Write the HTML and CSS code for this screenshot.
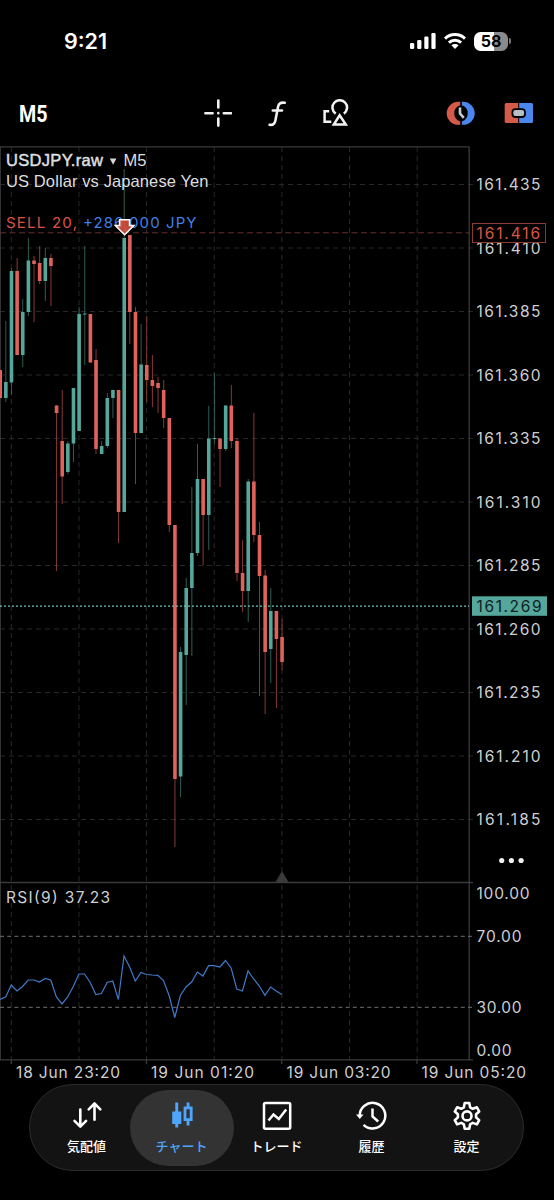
FILE: index.html
```html
<!DOCTYPE html>
<html lang="ja">
<head>
    <meta charset="UTF-8">
    <meta name="viewport" content="width=device-width, initial-scale=1.0">
    <title>USDJPY.raw M5</title>
    <link rel="stylesheet" href="styles.css">
</head>
<body>
    <header class="status-bar">
        <span class="status-time">9:21</span>
        <div class="status-icons">
            <svg width="26" height="18" viewBox="0 0 26 18" fill="#fff">
                <rect x="0" y="11" width="4.2" height="6" rx="1.2"/>
                <rect x="7.2" y="8" width="4.2" height="9" rx="1.2"/>
                <rect x="14.3" y="4.5" width="4.2" height="12.5" rx="1.2"/>
                <rect x="21.4" y="1" width="4.2" height="16" rx="1.2"/>
            </svg>
            <svg width="22" height="18" viewBox="0 0 22 18" fill="none" stroke="#fff" stroke-width="3">
                <path d="M1 6.6C6.5 1.2 15.5 1.2 21 6.6"/>
                <path d="M4.9 10.6C8.4 7.3 13.6 7.3 17.1 10.6"/>
                <path d="M11 17L7.4 13.3C9.4 11.5 12.6 11.5 14.6 13.3Z" fill="#fff" stroke="none"/>
            </svg>
            <div class="battery"><span class="battery-level">58</span></div>
        </div>
    </header>

    <div class="toolbar">
        <svg class="timeframe" width="60" height="28" viewBox="0 0 60 28">
            <text x="0" y="22.500" textLength="28.500" lengthAdjust="spacingAndGlyphs">M5</text>
        </svg>
        <svg width="28" height="28" viewBox="0 0 28 28" stroke="#f2f2f2" stroke-width="2.6" stroke-linecap="round">
            <path d="M14.3 1.5V8.5M14.3 19.5V26.6M1.4 14.2H8.6M19.8 14.2H27M14.3 14.15V14.25"/>
        </svg>
        <svg width="28" height="28" viewBox="0 0 28 28" fill="none" stroke="#f2f2f2" stroke-width="2.6" stroke-linecap="round">
            <path d="M5.6 25.8C9 26.4 10.7 25 11.4 21.5L14 8C14.6 4.5 16.6 3 20.8 3.8M8.8 11.5H18"/>
        </svg>
        <svg width="28" height="28" viewBox="0 0 28 28" fill="none" stroke="#f2f2f2" stroke-width="2.5">
            <path d="M13.7 14.6A7.3 7.3 0 1 1 21.8 14.6"/>
            <path d="M17.7 16.2L11.8 25.6H23.8Z"/>
            <path d="M7.2 12.2H2.6V22.8H9.3"/>
        </svg>
        <svg width="30" height="28" viewBox="0 0 30 28">
            <path d="M14.2 2.8H12.2A11.5 11.5 0 0 0 12.2 25.8H14.2V22.4A8.5 8.5 0 0 1 14.2 6.2Z" fill="#d65a4a"/>
            <path d="M15.8 2.8H17.2A11.5 11.5 0 0 1 17.2 25.8H15.8V22.4A8.5 8.5 0 0 0 15.8 6.2Z" fill="#4b86ee"/>
            <path d="M14 8.6V14.6L17.8 18.8" fill="none" stroke="#c8cccf" stroke-width="2.6"/>
        </svg>
        <svg width="30" height="28" viewBox="0 0 30 28">
            <path d="M2.2 4H14.2V24H2.2Q.7 24 .7 22.5V5.500Q.7 4 2.2 4Z" fill="#d65a4a"/>
            <path d="M15.200 4H27.500Q29 4 29 5.500V22.500Q29 24 27.500 24H15.200Z" fill="#4b86ee"/>
            <rect x="8.400" y="10.200" width="12.600" height="7.800" rx="3" fill="#b8bfc4" stroke="#000" stroke-width="1.800"/>
        </svg>
    </div>

    <svg class="chart" width="554" height="944" viewBox="0 140 554 944">
        <g id="grid"></g>
        <g class="frame">
            <path d="M0 146.800H469.500M0.200 147V1060M469.200 147V1060M0 882.500H473M0 1059.800H473"/>
            <path d="M11.300 1060V1064M146.500 1060V1064M281.700 1060V1064M417 1060V1064"/>
        </g>
        <path class="level" d="M0 936.300H473M0 1007.300H473"/>
        <path class="sell-line" d="M0 232.800H469"/>
        <g id="candles"></g>
        <path class="bid-line" d="M0 606.200H469"/>
        <path d="M275.500 882L282 871L288.500 882Z" fill="#3a3a3a"/>
        <polyline id="rsi" class="rsi"/>

        <text class="symbol" x="6" y="166" textLength="97">USDJPY.raw</text>
        <path d="M109.800 158.500H116.400L113.100 164.800Z" fill="#d8d8d8"/>
        <text class="title" x="123.500" y="166" textLength="23">M5</text>
        <text class="title" x="6" y="187" textLength="202.500">US Dollar vs Japanese Yen</text>
        <text class="order sell" x="6" y="228" textLength="71">SELL 20,</text>
        <text class="order profit" x="83" y="228" textLength="113.500">+286,000 JPY</text>
        <path class="sell-arrow" d="M119.600 219.800H129.600V225.500H133.800L124.600 234.700L115.400 225.500H119.600Z"/>

        <g id="prices"></g>
        <rect x="472.500" y="223.500" width="73" height="19" fill="none" stroke="#8e3a30"/>
        <text class="axis sell" x="476.500" y="238.500" textLength="63.500">161.416</text>
        <rect x="472" y="596.300" width="75" height="19.500" fill="#55a69b"/>
        <text class="axis bid" x="476.500" y="611.700" textLength="65">161.269</text>
        <g fill="#eee">
            <circle cx="501.700" cy="860.500" r="2.600"/>
            <circle cx="511.400" cy="860.500" r="2.600"/>
            <circle cx="521.100" cy="860.500" r="2.600"/>
        </g>

        <text class="axis" x="6" y="902.500" textLength="104">RSI(9) 37.23</text>
        <text class="axis" x="476.500" y="898.500" textLength="53">100.00</text>
        <text class="axis" x="476.500" y="941.700" textLength="45">70.00</text>
        <text class="axis" x="476.500" y="1012.700" textLength="45">30.00</text>
        <text class="axis" x="476.500" y="1056.200" textLength="35">0.00</text>
        <text class="axis" x="16" y="1077.700" textLength="104">18 Jun 23:20</text>
        <text class="axis" x="151" y="1077.700" textLength="103">19 Jun 01:20</text>
        <text class="axis" x="286.500" y="1077.700" textLength="104">19 Jun 03:20</text>
        <text class="axis" x="421.500" y="1077.700" textLength="104.500">19 Jun 05:20</text>
    </svg>

    <nav class="tab-bar">
        <a class="tab">
            <svg width="32" height="32" viewBox="0 0 32 32" fill="none" stroke="#fff" stroke-width="2.6" stroke-linecap="round" stroke-linejoin="round">
                <path d="M9.300 9.500V26M3.500 20.800L9.300 26.600L15.100 20.800"/>
                <path d="M23.500 19.800V4M17.700 9.300L23.500 3.500L29.300 9.300"/>
            </svg>
            <span>気配値</span>
        </a>
        <a class="tab active">
            <svg width="32" height="32" viewBox="0 0 32 32" fill="#4ea5fb">
                <path d="M9.300 2.500H12.200V11.500H15.300V24H12.200V27.500H9.300V24H6.200V11.500H9.300Z"/>
                <path fill-rule="evenodd" d="M20.600 2.500H23.500V6.500H26.600V21H23.500V25.500H20.600V21H17.600V6.500H20.600ZM20.400 9.200V18.300H23.800V9.200Z"/>
            </svg>
            <span>チャート</span>
        </a>
        <a class="tab">
            <svg width="32" height="32" viewBox="0 0 32 32" fill="none" stroke="#fff" stroke-width="2.500">
                <rect x="3" y="2.900" width="26.200" height="25.800" rx="1.500"/>
                <path d="M7.500 20.500L12.500 14.500L17.800 19L25.200 9.500"/>
            </svg>
            <span>トレード</span>
        </a>
        <a class="tab">
            <svg width="32" height="32" viewBox="0 0 32 32" fill="none" stroke="#fff" stroke-width="2.500">
                <path d="M3.700 16A12.800 12.800 0 1 1 7.600 24.900"/>
                <path d="M0 14.600H7.500L3.800 18.900Z" fill="#fff" stroke="none"/>
                <path d="M16.500 8.500V16.400L22.200 21.500"/>
            </svg>
            <span>履歴</span>
        </a>
        <a class="tab">
            <svg width="32" height="32" viewBox="0 0 32 32" fill="none" stroke="#fff" stroke-width="2.600" stroke-linejoin="round">
                <path d="M13.700 3H18.300L19.100 7.300L21.700 8.800L25.900 7.300L28.200 11.500L25.100 14.300V17.400L28.200 20.200L25.900 24.400L21.700 22.900L19.100 24.400L18.300 28.700H13.700L12.900 24.400L10.300 22.900L6.100 24.400L3.800 20.200L6.900 17.400V14.300L3.800 11.500L6.100 7.300L10.300 8.800L12.900 7.300Z"/>
                <circle cx="16" cy="15.900" r="4.500"/>
            </svg>
            <span>設定</span>
        </a>
    </nav>

    <script>
        // Each candle: direction, body top, body bottom, high, low
        const candles = [
            ['down', 370, 398, 370, 398], ['up', 382, 398, 321, 402],
            ['up', 271, 382.5, 268, 395], ['down', 271, 355, 258, 355],
            ['up', 312, 355, 299, 367], ['up', 260.5, 312, 238, 316],
            ['down', 260.5, 264, 256, 322], ['down', 263, 281, 246, 284],
            ['up', 258, 281, 248, 301], ['down', 258, 266, 254, 306],
            ['down', 405.5, 413, 405, 571], ['down', 441, 476.5, 390, 504],
            ['up', 443.5, 472, 441, 474], ['up', 388, 443.5, 388, 462],
            ['up', 314, 431, 307, 431], ['up', 313.5, 314.5, 246, 365],
            ['down', 314, 362.5, 314, 362.5], ['down', 360, 449, 349, 454],
            ['up', 446, 454, 441, 454], ['up', 398, 446, 393, 448],
            ['up', 390, 398, 390, 418], ['down', 390, 512, 390, 543],
            ['up', 238, 512, 169, 512], ['down', 235, 312, 235, 344],
            ['down', 312, 433, 307, 484], ['up', 364.5, 433, 324, 433],
            ['down', 365, 380, 316, 402], ['down', 380, 386, 355, 407],
            ['down', 383, 388, 377, 413], ['down', 390, 418, 380, 428],
            ['down', 418, 525, 418, 532], ['down', 525, 779, 525, 847],
            ['up', 652, 776.5, 647, 797], ['up', 588, 655, 578, 705],
            ['up', 553, 588, 487, 656], ['up', 479, 553, 444, 556],
            ['down', 479, 515, 479, 565], ['up', 438.5, 515, 406, 550],
            ['up', 438, 439, 373, 444], ['down', 438.5, 449, 438.5, 487],
            ['up', 405.5, 449, 405.5, 451], ['down', 405.5, 441, 385, 448],
            ['down', 441, 573, 438, 581], ['down', 573, 591, 540, 612],
            ['up', 481.5, 591, 479, 622], ['down', 481.5, 535, 413, 542],
            ['down', 535, 576, 522, 696], ['down', 575.5, 652, 570, 714],
            ['up', 611, 649, 588, 683], ['down', 611, 639, 611, 708],
            ['down', 637, 662, 619, 670]
        ];
        const rsi = [
            999.5, 997, 985, 991, 986.5, 980, 980, 982, 978.5, 980, 997, 1004, 997,
            986.5, 974, 974, 982.5, 994.5, 993.5, 982.5, 981, 999.5, 956, 967, 981,
            972.5, 974.5, 975, 975.3, 980.5, 995.5, 1017.5, 995.5, 987, 982, 972, 976,
            965.7, 965.7, 967, 960.5, 968, 989, 991, 971, 979, 986, 995.3, 987, 991, 994.5
        ];
        const step = 5.637;

        // Grid and price labels
        let grid = '';
        let prices = '';
        for (let i = 0; i < 7; i++) {
            const x = 11.3 + i * step * 12;
            grid += `<path class="grid" d="M${x} 147V1060"/>`;
        }
        for (let i = 0; i < 11; i++) {
            const y = 184.5 + i * 63.5;
            grid += `<path class="grid" d="M0 ${y}H473"/>`;
            prices += `<text class="axis" x="476.5" y="${y + 5.6}" textLength="64">${(161.435 - i * 0.025).toFixed(3)}</text>`;
        }
        document.getElementById('grid').innerHTML = grid;
        document.getElementById('prices').innerHTML = prices;

        // Candles
        document.getElementById('candles').innerHTML = candles.map(([dir, top, bottom, high, low], i) => {
            const x = 0.2 + i * step;
            return `<path class="wick ${dir}" d="M${x} ${high}V${low}"/>
                <rect class="body ${dir}" x="${x - 1.8}" y="${top}" width="3.6" height="${bottom - top}"/>`;
        }).join('');

        document.getElementById('rsi').setAttribute('points', rsi.map((y, i) => `${i * step},${y}`).join(' '));
    </script>
</body>
</html>
```
FILE: styles.css
```css
body {
    margin: 0;
    width: 554px;
    height: 1200px;
    overflow: hidden;
    background-color: #000;
    color: #fff;
    font-family: Inter, "Noto Sans CJK JP", sans-serif;
}
svg {
    display: block;
}
.status-bar {
    display: flex;
    justify-content: space-between;
    align-items: center;
    height: 82px;
    padding: 0 43px 1px 64px;
}
.status-time {
    font-size: 21.5px;
    font-weight: 600;
    letter-spacing: 0;
}
.status-icons {
    display: flex;
    align-items: center;
    gap: 8px;
}
.battery {
    display: flex;
    align-items: center;
}
.battery-level {
    width: 34px;
    height: 19px;
    border-radius: 6.5px;
    background: linear-gradient(to right, #fff 58%, #8a8a8a 58%);
    color: #000;
    font-size: 16px;
    font-weight: 700;
    line-height: 19px;
    text-align: center;
}
.battery::after {
    content: "";
    width: 2px;
    height: 6px;
    margin-left: 1px;
    border-radius: 0 2px 2px 0;
    background-color: #777;
}
.toolbar {
    display: grid;
    grid-template-columns: 204px 60px 58px 124px 58px 50px;
    align-items: center;
    height: 54px;
    padding-top: 3px;
}
.timeframe {
    margin-left: 19px;
    font-family: Roboto, sans-serif;
    font-size: 24px;
    font-weight: 700;
    fill: #fff;
}
.chart text {
    font-family: Inter, sans-serif;
}
.grid {
    stroke: #28282a;
    stroke-width: 1;
    stroke-dasharray: 5 4;
}
.frame {
    fill: none;
    stroke: #3b3b3b;
    stroke-width: 1.3;
}
.level {
    stroke: #707070;
    stroke-width: 1;
    stroke-dasharray: 4 3.2;
}
.sell-line {
    stroke: #66302a;
    stroke-dasharray: 6 3.5;
}
.bid-line {
    stroke: #6cc4b8;
    stroke-width: 1.3;
    stroke-dasharray: 2 2;
}
.wick {
    stroke-width: 0.9;
}
.wick.up {
    stroke: #34685f;
}
.wick.down {
    stroke: #97403c;
}
.body.up {
    fill: #55a69b;
}
.body.down {
    fill: #e0635b;
}
.rsi {
    fill: none;
    stroke: #4279c8;
    stroke-width: 1.2;
}
.chart .symbol,
.chart .title {
    font-family: "Liberation Sans", sans-serif;
    font-size: 16.5px;
    fill: #dedede;
}
.chart .symbol {
    stroke: #dedede;
    stroke-width: 0.5;
}
.axis {
    font-size: 15.5px;
    fill: #cfcfcf;
}
.order {
    font-size: 15px;
}
.sell {
    fill: #db5445;
}
.profit {
    fill: #427fe8;
}
.sell-arrow {
    fill: #e2533f;
    fill-opacity: 0.85;
    stroke: #fff;
    stroke-width: 1.6;
}
.bid {
    fill: #10211f;
}
.tab-bar {
    display: flex;
    box-sizing: border-box;
    width: 495px;
    height: 87px;
    margin: 0 0 0 29px;
    padding: 5px 9px;
    border: 1px solid #2b2b2b;
    border-radius: 44px;
    background-color: #131313;
}
.tab {
    display: flex;
    flex: 1;
    flex-direction: column;
    align-items: center;
    gap: 4px;
    height: 66px;
    padding-top: 10px;
    font-family: "Noto Sans CJK JP", sans-serif;
    font-size: 13px;
    font-weight: 500;
    line-height: 20px;
}
.tab span {
    white-space: nowrap;
}
.tab.active {
    margin: 0 -4.5px;
    padding: 10px 4.5px 0;
    border-radius: 38px;
    background-color: #333;
    color: #4ea5fb;
}
```
